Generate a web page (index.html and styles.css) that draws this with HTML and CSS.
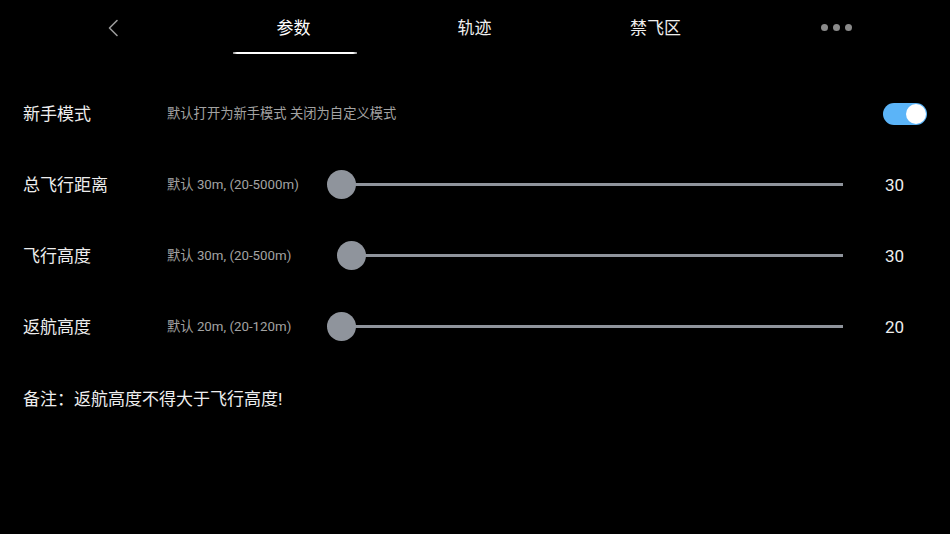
FILE: index.html
```html
<!DOCTYPE html>
<html lang="zh-CN">
<head>
<meta charset="utf-8">
<title>参数</title>
<link rel="stylesheet" href="styles.css">
</head>
<body>
<div class="page">
  <header class="tabs">
    <div class="tab tab-icon">
      <svg class="back" width="12" height="18" viewBox="0 0 12 18"><path d="M10 1.5 L2.5 9 L10 16.5" fill="none" stroke="#9a9a9a" stroke-width="1.6" stroke-linecap="round" stroke-linejoin="round"/></svg>
    </div>
    <div class="tab active"><span class="tab-text">参数</span><span class="indicator"></span></div>
    <div class="tab"><span class="tab-text">轨迹</span></div>
    <div class="tab"><span class="tab-text">禁飞区</span></div>
    <div class="tab tab-icon">
      <span class="dots"><i></i><i></i><i></i></span>
    </div>
  </header>
  <main class="content">
    <div class="row">
      <div class="label">新手模式</div>
      <div class="desc desc-wide">默认打开为新手模式 关闭为自定义模式</div>
      <div class="switch"><span class="switch-knob"></span></div>
    </div>
    <div class="row">
      <div class="label">总飞行距离</div>
      <div class="desc">默认 30m, (20-5000m)</div>
      <div class="slider"><span class="knob" style="margin-left:0px"></span><span class="track"></span></div>
      <div class="value">30</div>
    </div>
    <div class="row">
      <div class="label">飞行高度</div>
      <div class="desc">默认 30m, (20-500m)</div>
      <div class="slider"><span class="knob" style="margin-left:10px"></span><span class="track"></span></div>
      <div class="value">30</div>
    </div>
    <div class="row">
      <div class="label">返航高度</div>
      <div class="desc">默认 20m, (20-120m)</div>
      <div class="slider"><span class="knob" style="margin-left:0px"></span><span class="track"></span></div>
      <div class="value">20</div>
    </div>
    <div class="row note">备注：返航高度不得大于飞行高度!</div>
  </main>
</div>
</body>
</html>
```
FILE: styles.css
```css
* { box-sizing: border-box; }
html, body {
  margin: 0;
  padding: 0;
  background: #000;
}
body {
  width: 950px;
  height: 534px;
  overflow: hidden;
  font-family: Roboto, "Noto Sans CJK SC", sans-serif;
  color: #ededed;
}
.page {
  width: 950px;
  height: 534px;
  background: #000;
}
.tabs {
  display: flex;
  height: 56px;
  padding: 0 23px 0 22px;
}
.tab {
  flex: 1;
  display: flex;
  flex-direction: column;
  align-items: center;
  padding-top: 16px;
}
.tab-text {
  font-size: 17px;
  line-height: 24px;
  height: 24px;
  color: #eeeeee;
}
.tab.active .tab-text { color: #ffffff; }
.indicator {
  display: block;
  width: 124px;
  height: 2px;
  margin-top: 12px;
  margin-left: 3px;
  background: linear-gradient(90deg, rgba(255,255,255,0.5) 0, #fff 4px, #fff 120px, rgba(255,255,255,0.5) 124px);
}
.tab-icon {
  padding-top: 19px;
}
.back {
  display: block;
  margin-left: 0;
}
.dots {
  display: flex;
  gap: 5px;
  padding-top: 5px;
}
.dots i {
  display: block;
  width: 7px;
  height: 7px;
  border-radius: 50%;
  background: #8a8a8a;
}
.content {
  padding: 22px 23px 0 23px;
}
.row {
  display: flex;
  align-items: center;
  height: 71px;
}
.label {
  width: 144px;
  flex: none;
  font-size: 17px;
  line-height: 24px;
  color: #eeeeee;
}
.desc {
  width: 160px;
  flex: none;
  font-size: 13.3px;
  line-height: 20px;
  color: #a3a3a3;
  white-space: nowrap;
}
.desc-wide {
  flex: 1;
  width: auto;
}
.switch {
  width: 44px;
  height: 22px;
  border-radius: 11px;
  background: #5bb4f8;
  display: flex;
  align-items: center;
  justify-content: flex-end;
  padding: 0 1px;
}
.switch-knob {
  width: 20px;
  height: 20px;
  border-radius: 50%;
  background: #ffffff;
}
.slider {
  width: 516px;
  flex: none;
  display: flex;
  align-items: center;
  height: 29px;
}
.knob {
  flex: none;
  width: 29px;
  height: 29px;
  border-radius: 50%;
  background: #8f949c;
}
.track {
  flex: 1;
  height: 3px;
  background: #8f949c;
  margin-left: -2px;
}
.value {
  flex: 1;
  padding-left: 42px;
  font-size: 17px;
  line-height: 24px;
  color: #eeeeee;
}
.note {
  font-size: 17px;
  color: #eeeeee;
}
```
